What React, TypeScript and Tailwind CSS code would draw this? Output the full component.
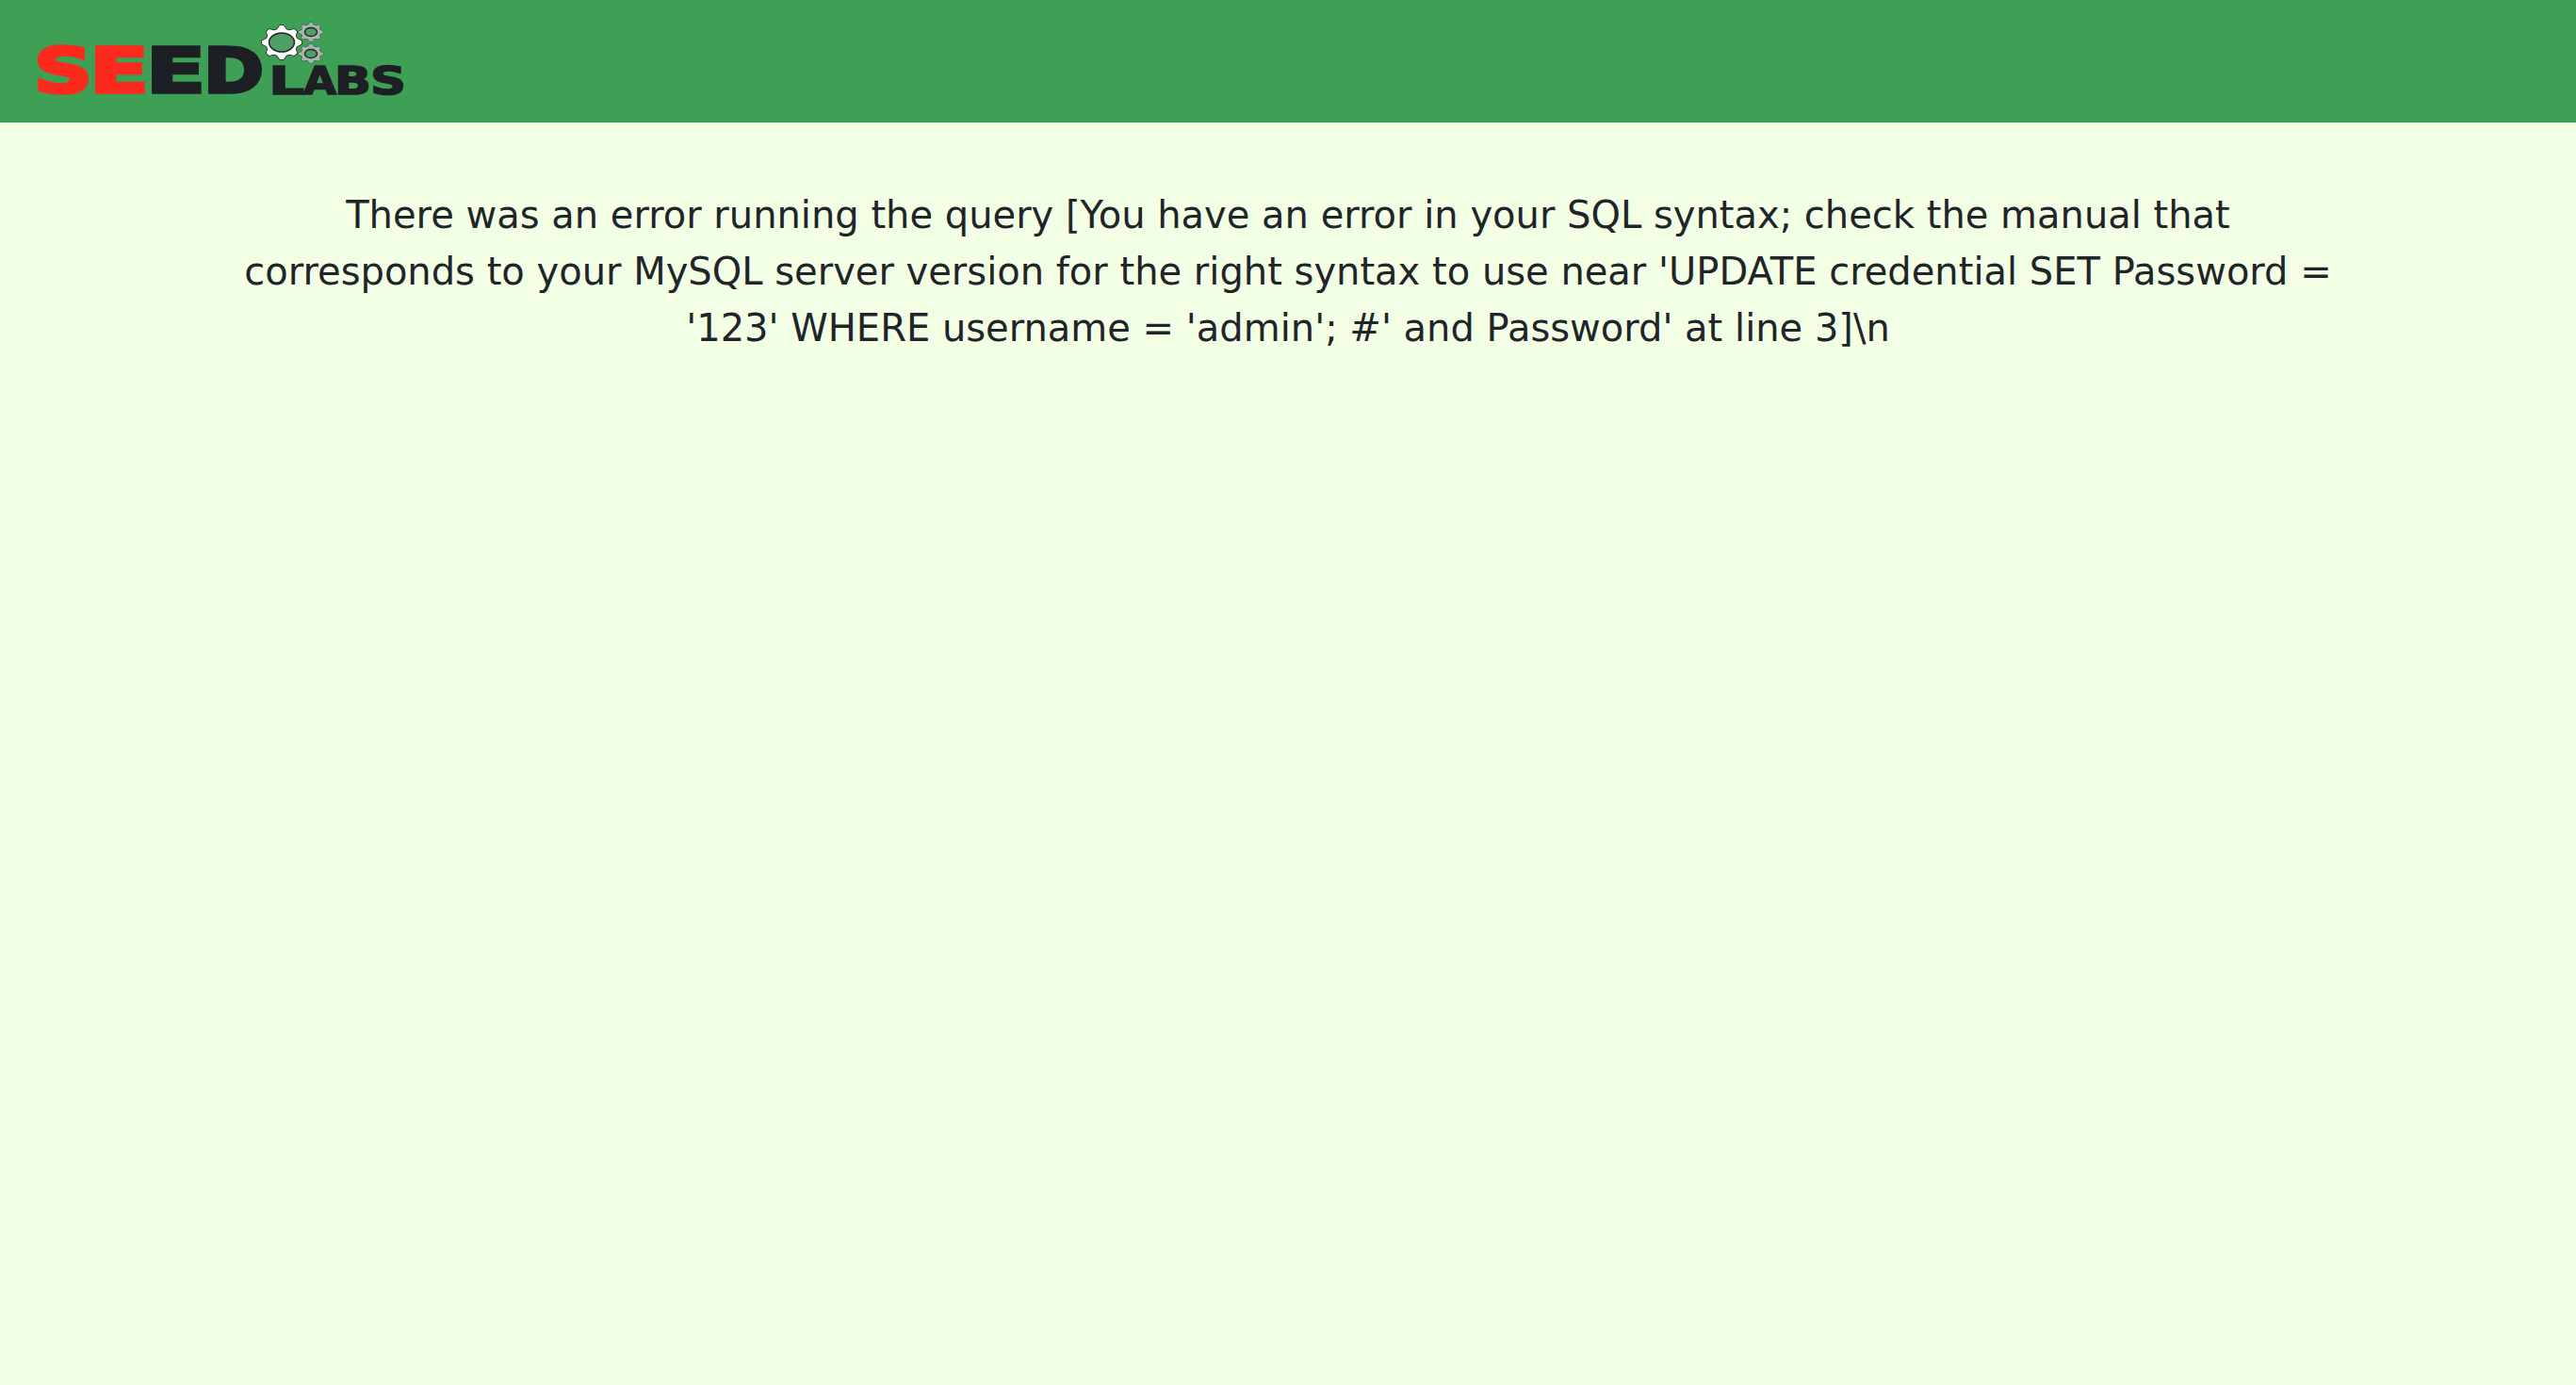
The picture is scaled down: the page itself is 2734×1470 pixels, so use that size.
function gearPath(cx: number, cy: number, rx: number, ry: number, teeth: number) {
  // toothed outline, outer radius rx/ry, teeth 20% deep
  const pts: string[] = [];
  const steps = teeth * 4;
  for (let i = 0; i < steps; i++) {
    const angle = ((i - 0.5) / steps) * Math.PI * 2;
    const k = i % 4 < 2 ? 1 : 0.8;
    pts.push(`${(cx + Math.cos(angle) * rx * k).toFixed(2)},${(cy + Math.sin(angle) * ry * k).toFixed(2)}`);
  }
  return `M${pts.join('L')}Z`;
}

function Gear({ cx, cy, rx, ry, small }: { cx: number; cy: number; rx: number; ry: number; small?: boolean }) {
  const d = gearPath(cx, cy, rx, ry, 8);
  const holeRx = rx * (small ? 0.5 : 0.64);
  const holeRy = ry * (small ? 0.46 : 0.56);

  return (
    <g>
      <path d={d} fill="#1f2226" stroke="#1f2226" strokeWidth={small ? 0.5 : 1.5} strokeLinejoin="round" />
      <path d={d} fill={small ? '#aab5ad' : '#ffffff'} />
      <ellipse cx={cx} cy={cy} rx={holeRx} ry={holeRy} fill="#4f9f66" stroke="#23262a" strokeWidth={small ? 1.5 : 1.5} />
    </g>
  );
}

function SeedLogo() {
  const big = 'font-["DejaVu_Sans"] font-bold';

  return (
    <svg width="480" height="130" viewBox="0 0 480 130" className="block">
      <g className={big} fontSize="66" strokeWidth="3.5">
        <text x="36" y="98" textLength="62" lengthAdjust="spacingAndGlyphs" fill="#fb2a1c" stroke="#fb2a1c">
          S
        </text>
        <text x="95" y="98" textLength="63" lengthAdjust="spacingAndGlyphs" fill="#fb2a1c" stroke="#fb2a1c">
          E
        </text>
        <text x="155" y="98" textLength="63" lengthAdjust="spacingAndGlyphs" fill="#1d1f25" stroke="#1d1f25">
          E
        </text>
        <text x="216" y="98" textLength="64" lengthAdjust="spacingAndGlyphs" fill="#1d1f25" stroke="#1d1f25">
          D
        </text>
      </g>
      <g className={big} fontSize="41" strokeWidth="1.5" fill="#1d1f25" stroke="#1d1f25">
        <text x="285" y="100" textLength="38" lengthAdjust="spacingAndGlyphs">
          L
        </text>
        <text x="322" y="100" textLength="35" lengthAdjust="spacingAndGlyphs">
          A
        </text>
        <text x="355" y="100" textLength="39" lengthAdjust="spacingAndGlyphs">
          B
        </text>
        <text x="393" y="100" textLength="38" lengthAdjust="spacingAndGlyphs">
          S
        </text>
      </g>
      <Gear cx={299} cy={45} rx={21} ry={18} />
      <Gear cx={330} cy={34} rx={13} ry={10} small />
      <Gear cx={330} cy={57} rx={13} ry={10} small />
    </svg>
  );
}

export default function App() {
  return (
    <div className='min-h-screen bg-[#f3ffe5] font-["DejaVu_Sans",sans-serif] text-[#212529]'>
      <nav className="flex h-[130px] items-center bg-[#3ea055]">
        <SeedLogo />
      </nav>

      <div className="mx-auto mt-[68px] w-[2230px] text-center text-[40px] leading-[60px]">
        There was an error running the query [You have an error in your SQL syntax; check the manual that corresponds to
        your MySQL server version for the right syntax to use near 'UPDATE credential SET Password = '123' WHERE username
        = 'admin'; #' and Password' at line 3]\n
      </div>
    </div>
  );
}
